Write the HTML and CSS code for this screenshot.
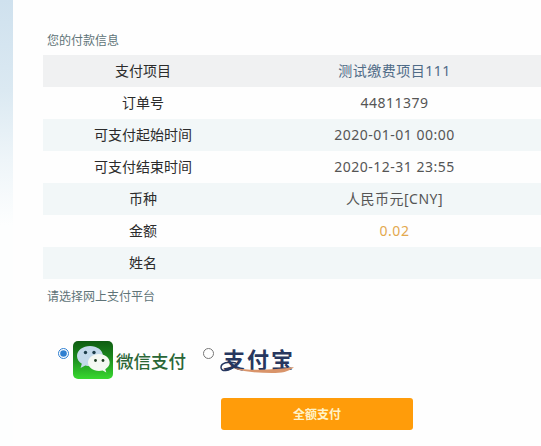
FILE: index.html

```html
<!DOCTYPE html>
<html lang="zh-CN">
<head>
  <meta charset="UTF-8">
  <meta name="viewport" content="width=device-width, initial-scale=1.0">
  <title>支付</title>
  <link rel="stylesheet" href="styles.css">
</head>
<body>
  <div class="edge"></div>
  <main class="content">
    <p class="caption caption-first">您的付款信息</p>
    <table class="info">
      <tr><th>支付项目</th><td class="project">测试缴费项目111</td></tr>
      <tr><th>订单号</th><td>44811379</td></tr>
      <tr><th>可支付起始时间</th><td>2020-01-01 00:00</td></tr>
      <tr><th>可支付结束时间</th><td>2020-12-31 23:55</td></tr>
      <tr><th>币种</th><td>人民币元[CNY]</td></tr>
      <tr><th>金额</th><td class="amount">0.02</td></tr>
      <tr><th>姓名</th><td></td></tr>
    </table>
    <p class="caption caption-second">请选择网上支付平台</p>

    <div class="platforms">
      <label class="platform wechat">
        <input type="radio" name="platform" checked>
        <svg class="wechat-icon" width="40" height="38" viewBox="0 0 40 38">
          <defs>
            <linearGradient id="wechat-bg" x1="0" y1="0" x2="0" y2="1">
              <stop offset="0" stop-color="#0f5c12"/>
              <stop offset="0.45" stop-color="#1c8a1e"/>
              <stop offset="1" stop-color="#38d92f"/>
            </linearGradient>
          </defs>
          <rect width="40" height="38" rx="5" fill="url(#wechat-bg)"/>
          <path d="M17 5c-7 0-13 4.300-13 10 0 3.200 1.900 6 4.800 7.800L7.600 27l4.700-2.400c1.500.4 3 .6 4.700.6 7 0 13-4.500 13-10.200S24 5 17 5z" fill="#c3d9ea"/>
          <path d="M26 13c-6 0-11 3.800-11 8.500S20 30 26 30c1.300 0 2.500-.2 3.700-.5l3.600 2-1-3.300c2.700-1.600 4.400-3.900 4.400-6.700C36.700 16.800 32 13 26 13z" fill="#f4f8f2"/>
          <circle cx="12.500" cy="11.500" r="1.700" fill="#1d3d4a"/>
          <circle cx="21" cy="11.500" r="1.700" fill="#1d3d4a"/>
          <circle cx="22.500" cy="19.500" r="1.400" fill="#1d3a20"/>
          <circle cx="30" cy="19.500" r="1.400" fill="#1d3a20"/>
        </svg>
        <span class="wechat-name">微信支付</span>
      </label>

      <label class="platform alipay">
        <input type="radio" name="platform">
        <span class="alipay-logo">
          <span class="alipay-name">支付宝</span>
          <svg class="alipay-wave" width="76" height="14" viewBox="0 0 76 14">
            <path d="M16 3C8 1 1 3 1 7.500S9 12 16 5" fill="none" stroke="#27375f" stroke-width="1.500"/>
            <path d="M14 8c18 3 40 2 60-1-5 5-13 6-22 6-14 0-28-1-38-5z" fill="#d9946a"/>
          </svg>
        </span>
      </label>
    </div>

    <div class="actions">
      <button class="pay" type="button">全额支付</button>
    </div>
  </main>
</body>
</html>
```

FILE: styles.css

```css
html, body {
  height: 100%;
  overflow: hidden;
}
body {
  margin: 0;
  display: flex;
  background-color: #fefefe;
  color: #555;
  font-family: "Noto Sans", "Noto Sans CJK SC", sans-serif;
  font-size: 14px;
}
.edge {
  width: 13px;
  flex: none;
  background: linear-gradient(to bottom, #cfe1ee 0, #dbe9f2 90px, #eef5f9 160px, #fdfefe 225px);
}
.content {
  flex: 1;
  min-width: 0;
  padding: 33px 0 0 30px;
}
.caption {
  margin: 0;
  padding-left: 4px;
  font-size: 12px;
  line-height: 15px;
  color: #5f7478;
}
.caption-first {
  margin-bottom: 7px;
}
.caption-second {
  margin-top: 10px;
}
.info {
  width: 100%;
  border-collapse: collapse;
  table-layout: fixed;
}
.info tr {
  height: 32px;
}
.info tr:nth-child(odd) {
  background-color: #f2f7f8;
}
.info tr:first-child {
  background-color: #f0f1f2;
}
.info th, .info td {
  padding: 0 0 2px;
  text-align: center;
  font-weight: normal;
}
.info th {
  width: 200px;
  color: #2b2b2b;
}
.info td {
  padding-left: 5px;
  letter-spacing: 0.5px;
}
.info .project {
  color: #4f6b87;
}
.info .amount {
  color: #e3a94e;
}
.platforms {
  display: flex;
  align-items: flex-start;
  margin-top: 37px;
  padding-left: 15px;
}
.platform {
  display: flex;
  align-items: flex-start;
}
.platform input {
  width: 11px;
  height: 11px;
  margin: 0;
  accent-color: #2f7fd0;
}
.wechat input {
  margin-top: 7px;
}
.wechat-icon {
  margin-left: 4px;
}
.wechat-name {
  margin: 9px 0 0 3px;
  font-size: 17.500px;
  font-weight: 500;
  line-height: 22px;
  color: #2a6636;
}
.alipay {
  margin-left: 17px;
}
.alipay input {
  margin-top: 7px;
  accent-color: #777;
}
.alipay-logo {
  position: relative;
  display: block;
  width: 76px;
  height: 32px;
  margin: 4px 0 0 6px;
}
.alipay-name {
  display: block;
  padding-left: 3px;
  font-size: 22px;
  font-weight: bold;
  line-height: 28px;
  letter-spacing: 2px;
  color: #27375f;
}
.alipay-wave {
  position: absolute;
  left: 0;
  top: 15px;
}
.actions {
  margin-top: 19px;
  padding-left: 178px;
}
.pay {
  display: block;
  width: 192px;
  height: 32px;
  padding: 0;
  border: none;
  border-radius: 3px;
  background-color: #ff9c0a;
  color: #fff3c8;
  font-family: inherit;
  font-size: 12px;
  font-weight: bold;
}
```
